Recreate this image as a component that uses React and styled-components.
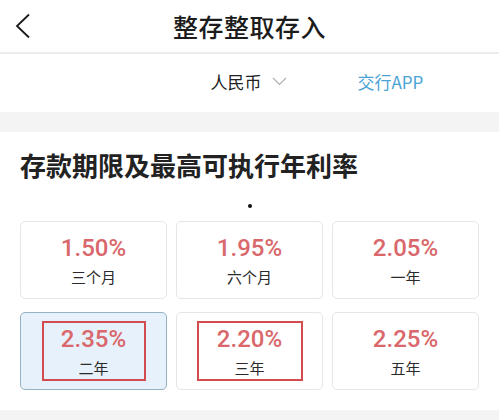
import React from "react";
import styled, { createGlobalStyle } from "styled-components";

const Global = createGlobalStyle`
  html, body { margin: 0; padding: 0; background: #ffffff; }
  body { font-family: Roboto, "Noto Sans CJK SC", "Noto Sans", sans-serif; -webkit-font-smoothing: antialiased; }
  * { box-sizing: border-box; }
`;

const Page = styled.div`
  width: 499px;
  min-height: 420px;
  background: #f4f4f4;
  display: flex;
  flex-direction: column;
`;

const Header = styled.header`
  height: 54px;
  background: #fff;
  border-bottom: 2px solid #ececec;
  display: grid;
  grid-template-columns: 1fr auto 1fr;
  align-items: center;
`;

const BackButton = styled.button`
  justify-self: start;
  margin-left: 14px;
  width: 16px;
  height: 26px;
  padding: 0;
  border: 0;
  background: none;
  display: flex;
  align-items: center;
  justify-content: center;
`;

const Title = styled.h1`
  margin: 0;
  font-family: "Noto Sans CJK SC", sans-serif;
  font-size: 25px;
  font-weight: 500;
  color: #1c1c1c;
  letter-spacing: 0.5px;
`;

const CurrencyRow = styled.div`
  height: 58px;
  background: #fff;
  display: grid;
  grid-template-columns: 1fr auto 1fr;
  align-items: center;
`;

const Currency = styled.div`
  grid-column: 2;
  display: flex;
  align-items: center;
  gap: 10px;
  font-family: "Noto Sans CJK SC", sans-serif;
  font-size: 17px;
  color: #222;
  margin-left: -2px;
  margin-bottom: 4px;
`;

const AppLink = styled.a`
  justify-self: start;
  margin-left: 71px;
  margin-bottom: 4px;
  font-family: "Noto Sans CJK SC", sans-serif;
  font-size: 17px;
  color: #4aa3d6;
  text-decoration: none;
`;

const Gap = styled.div`
  height: 20px;
`;

const Section = styled.section`
  background: #fff;
  padding: 18px 19px 20px 20px;
  display: flex;
  flex-direction: column;
`;

const SectionTitle = styled.h2`
  margin: 0;
  font-family: "Noto Sans CJK SC", sans-serif;
  font-size: 26px;
  line-height: 30px;
  font-weight: 700;
  color: #222;
`;

const Dot = styled.span`
  align-self: center;
  width: 4px;
  height: 4px;
  border-radius: 50%;
  background: #111;
  margin: 24px 0 13px;
`;

const Grid = styled.div`
  display: grid;
  grid-template-columns: repeat(3, 147px);
  grid-auto-rows: 78px;
  column-gap: 9px;
  row-gap: 13px;
`;

const Card = styled.div`
  border: 1px solid ${(p) => (p.$selected ? "#94b2bf" : "#e6e6e6")};
  background: ${(p) => (p.$selected ? "#e7f1fb" : "#fff")};
  border-radius: 5px;
  display: flex;
  align-items: center;
  justify-content: center;
`;

const Content = styled.div`
  width: ${(p) => (p.$wide ? "106px" : "104px")};
  height: 60px;
  border: 2px solid ${(p) => (p.$marked ? "#d24b4f" : "transparent")};
  display: flex;
  flex-direction: column;
  align-items: center;
  justify-content: center;
  padding-top: 1px;
`;

const Rate = styled.div`
  font-family: Roboto, sans-serif;
  font-size: 24px;
  line-height: 26px;
  font-weight: 500;
  color: #d9676b;
`;

const Term = styled.div`
  font-family: "Noto Sans CJK SC", sans-serif;
  font-size: 15px;
  line-height: 20px;
  color: #2a2a2a;
  margin-top: 6px;
`;

const Bottom = styled.div`
  flex: 1;
`;

const rates = [
  { rate: "1.50%", term: "三个月" },
  { rate: "1.95%", term: "六个月" },
  { rate: "2.05%", term: "一年" },
  { rate: "2.35%", term: "二年", selected: true, marked: true },
  { rate: "2.20%", term: "三年", marked: true, wide: true },
  { rate: "2.25%", term: "五年" },
];

export default function App() {
  return (
    <>
      <Global />
      <Page>
        <Header>
          <BackButton aria-label="返回">
            <svg width="15" height="26" viewBox="0 0 15 26" fill="none">
              <polyline points="14,1.5 2,13 14,24.5" stroke="#1a1a1a" strokeWidth="1.8" strokeLinejoin="miter" />
            </svg>
          </BackButton>
          <Title>整存整取存入</Title>
        </Header>
        <CurrencyRow>
          <Currency>
            人民币
            <svg width="15" height="9" viewBox="0 0 15 9" fill="none">
              <polyline points="1,1 7.5,7.5 14,1" stroke="#b0b0b0" strokeWidth="1.2" />
            </svg>
          </Currency>
          <AppLink>交行APP</AppLink>
        </CurrencyRow>
        <Gap />
        <Section>
          <SectionTitle>存款期限及最高可执行年利率</SectionTitle>
          <Dot />
          <Grid>
            {rates.map((r) => (
              <Card key={r.term} $selected={r.selected}>
                <Content $marked={r.marked} $wide={r.wide}>
                  <Rate>{r.rate}</Rate>
                  <Term>{r.term}</Term>
                </Content>
              </Card>
            ))}
          </Grid>
        </Section>
        <Bottom />
      </Page>
    </>
  );
}
